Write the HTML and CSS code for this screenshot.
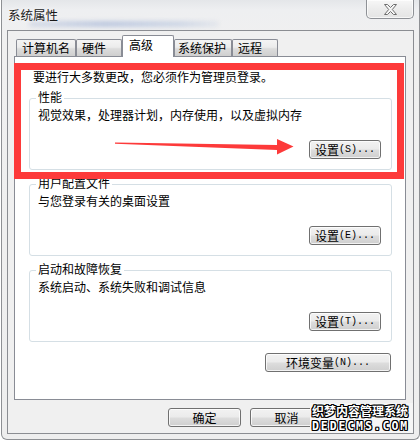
FILE: index.html
```html
<!DOCTYPE html>
<html lang="zh-CN">
<head>
<meta charset="utf-8">
<title>系统属性</title>
<link rel="stylesheet" href="styles.css">
</head>
<body>
<div class="window">
  <div class="titlebar">
    <span class="glass-blur"></span>
    <span class="title">系统属性</span>
    <button class="close" aria-label="关闭">
      <svg width="13" height="11" viewBox="0 0 13 11"><polygon points="0.5,0.5 3.5,0.5 6.5,3.5 9.5,0.5 12.5,0.5 8.3,5.5 12.5,10.5 9.5,10.5 6.5,7.5 3.5,10.5 0.5,10.5 4.7,5.5" fill="#f6f6f6" stroke="#6e6e6e" stroke-width="1" stroke-linejoin="round"/></svg>
    </button>
  </div>
  <div class="client">
    <div class="tabs">
      <div class="tab">计算机名</div>
      <div class="tab tab-hw">硬件</div>
      <div class="tab active">高级</div>
      <div class="tab tab-sp">系统保护</div>
      <div class="tab tab-rm">远程</div>
    </div>
    <div class="panel">
      <p class="notice">要进行大多数更改，您必须作为管理员登录。</p>
      <div class="group">
        <span class="legend">性能</span>
        <p class="desc">视觉效果，处理器计划，内存使用，以及虚拟内存</p>
        <div class="row"><button class="btn">设置<span class="mono">(S)...</span></button></div>
      </div>
      <div class="group">
        <span class="legend">用户配置文件</span>
        <p class="desc">与您登录有关的桌面设置</p>
        <div class="row"><button class="btn">设置<span class="mono">(E)...</span></button></div>
      </div>
      <div class="group">
        <span class="legend">启动和故障恢复</span>
        <p class="desc">系统启动、系统失败和调试信息</p>
        <div class="row"><button class="btn">设置<span class="mono">(T)...</span></button></div>
      </div>
      <div class="row env"><button class="btn wide">环境变量<span class="mono">(N)...</span></button></div>
      <div class="highlight"></div>
      <svg class="arrow" width="180" height="18" viewBox="0 0 180 18"><polygon points="0,4.6 162,7 162,1 178.5,8.5 162,16.5 162,12 0,5.8" fill="#fd3a3a"/></svg>
    </div>
    <div class="actions">
      <button class="btn">确定</button>
      <button class="btn">取消</button>
      <span class="btn-slot"></span>
    </div>
  </div>
  <div class="watermark">
    <div class="wm-cn">织梦内容管理系统</div>
    <div class="wm-en">DEDECMS.COM</div>
  </div>
</div>
</body>
</html>
```

FILE: styles.css
```css
* { box-sizing: border-box; }

html, body {
  margin: 0;
  padding: 0;
}

body {
  width: 420px;
  height: 441px;
  overflow: hidden;
  background: #ffffff;
  font-family: "Noto Sans CJK SC", "Noto Sans", sans-serif;
  font-size: 12px;
  line-height: 14px;
  color: #000;
}

p { margin: 0; }

.window {
  position: relative;
  margin-left: 1px;
  width: 419px;
  height: 440px;
  padding: 0 5px 5px 5px;
  border: 1px solid #8e9094;
  border-top: none;
  border-radius: 0 0 6px 6px;
  background: linear-gradient(#e4e6e9 0px, #eeeff1 10px, #f0f0f0 40px, #eeeeee 100%);
  display: flex;
  flex-direction: column;
}

.titlebar {
  position: relative;
  height: 30px;
  display: flex;
  justify-content: space-between;
  align-items: flex-start;
}

.glass-blur {
  position: absolute;
  left: 22px;
  top: 21px;
  width: 190px;
  height: 6px;
  border-radius: 3px;
  background: linear-gradient(90deg, rgba(170,185,215,0.35), rgba(150,170,210,0.55) 40%, rgba(160,180,215,0.4) 80%, rgba(190,200,220,0.2));
  filter: blur(2px);
}

.title {
  position: relative;
  margin: 8px 0 0 1px;
  font-size: 12.5px;
  color: #1a1a1a;
  text-shadow: 0 0 4px rgba(255,255,255,0.9);
}

.close {
  width: 48px;
  height: 19px;
  margin: 0;
  padding: 0;
  border: 1px solid #8e9196;
  border-top: none;
  border-radius: 0 0 5px 5px;
  background: linear-gradient(#f7f7f7, #ececec 50%, #e4e4e4 100%);
  box-shadow: inset 0 0 0 1px rgba(255,255,255,0.7);
  display: flex;
  align-items: center;
  justify-content: center;
}

.close svg { display: block; margin-top: 1px; }

.client {
  height: 404px;
  border: 1px solid #8b8d92;
  background: #f0f0f0;
  padding: 4px 7px 0 6px;
  display: flex;
  flex-direction: column;
}

.tabs {
  display: flex;
  align-items: flex-end;
  height: 21px;
  margin-left: 2px;
}

.tab {
  height: 17px;
  padding: 1px 0 0 5px;
  border: 1px solid #898c95;
  border-bottom: none;
  border-radius: 2px 2px 0 0;
  background: linear-gradient(#f4f4f4 0%, #ececec 45%, #dcdcdc 55%, #cfcfcf 100%);
  white-space: nowrap;
  width: 60px;
}

.tab-hw { width: 46px; }
.tab-sp { width: 58px; padding-left: 3px; }
.tab-rm { width: 46px; }

.tab.active {
  position: relative;
  z-index: 1;
  width: 52px;
  height: 22px;
  margin-bottom: -1px;
  padding: 2px 0 0 6px;
  background: #ffffff;
}

.panel {
  position: relative;
  width: 392px;
  height: 344px;
  border: 1px solid #898c95;
  background: #ffffff;
  padding: 13px 13px 0 14px;
}

.notice {
  padding-left: 4px;
}

.group {
  position: relative;
  margin-top: 14px;
  height: 72px;
  border: 1px solid #d5dfe5;
  border-radius: 3px;
  padding: 9px 10px 10px 8px;
}

.legend {
  position: absolute;
  left: 6px;
  top: -9px;
  padding: 0 2px;
  background: #ffffff;
}

.row {
  display: flex;
  justify-content: flex-end;
  margin-top: 18px;
}

.row.env {
  margin-top: 11px;
  margin-right: 1px;
}

.btn {
  width: 72px;
  height: 19px;
  margin: 0;
  padding: 0;
  border: 1px solid #707070;
  border-radius: 3px;
  background: linear-gradient(#f2f2f2 0%, #ebebeb 48%, #dddddd 52%, #cfcfcf 100%);
  box-shadow: inset 0 0 0 1px rgba(255,255,255,0.75);
  font-family: "Noto Sans CJK SC", "Noto Sans", sans-serif;
  font-size: 12px;
  line-height: 14px;
  color: #000;
  display: flex;
  align-items: center;
  justify-content: center;
  white-space: nowrap;
}

.btn.wide { width: 126px; }

.mono {
  font-family: "Liberation Mono", "DejaVu Sans Mono", monospace;
  font-size: 10px;
}

.highlight {
  position: absolute;
  left: -1px;
  top: 6px;
  width: 390px;
  height: 116px;
  border: 7px solid #fd3a3a;
  pointer-events: none;
}

.arrow {
  position: absolute;
  left: 100px;
  top: 81px;
  display: block;
}

.actions {
  display: flex;
  justify-content: flex-end;
  gap: 9px;
  margin-top: 8px;
  margin-right: 1px;
}

.actions .btn { width: 73px; }

.btn-slot {
  width: 73px;
  height: 19px;
}

.watermark {
  position: absolute;
  left: 308px;
  top: 403px;
  width: 103px;
  height: 30px;
  padding: 1px 0 0 2px;
  background: #f6f6f6;
  color: #ffffff;
  font-weight: 700;
  text-shadow:
    -1px -1px 0 #000, 1px -1px 0 #000, -1px 1px 0 #000, 1px 1px 0 #000,
    0 -1px 0 #000, 0 1px 0 #000, -1px 0 0 #000, 1px 0 0 #000;
}

.wm-cn {
  font-size: 12px;
  line-height: 14px;
  height: 14px;
  white-space: nowrap;
}

.wm-en {
  margin-top: 3px;
  font-family: "DejaVu Sans Mono", "Liberation Mono", monospace;
  font-size: 11.5px;
  line-height: 11px;
  letter-spacing: 1.9px;
  white-space: nowrap;
}
```
